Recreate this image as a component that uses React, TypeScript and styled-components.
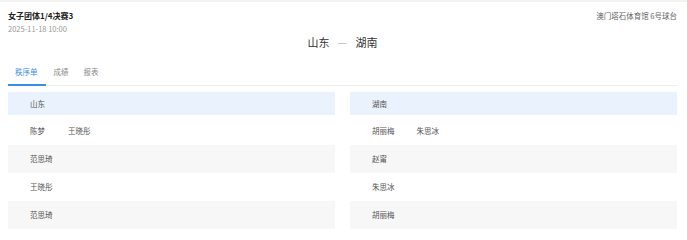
import React from "react";
import styled, { createGlobalStyle } from "styled-components";

type Side = {
  team: string;
  rows: string[][];
};

const home: Side = {
  team: "山东",
  rows: [["陈梦", "王晓彤"], ["范思琦"], ["王晓彤"], ["范思琦"]],
};

const away: Side = {
  team: "湖南",
  rows: [["胡丽梅", "朱思冰"], ["赵甯"], ["朱思冰"], ["胡丽梅"]],
};

const tabs = ["秩序单", "成绩", "报表"];

const GlobalStyle = createGlobalStyle`
  html, body {
    margin: 0;
    padding: 0;
    background: #ffffff;
    font-family: "Noto Sans CJK SC", "Noto Sans", sans-serif;
  }
`;

const TeamColumn = ({ side }: { side: Side }) => (
  <Column>
    <Row tone="head">
      <Name>{side.team}</Name>
    </Row>
    {side.rows.map((names, i) => (
      <Row key={i} tone={i % 2 === 0 ? "plain" : "gray"}>
        {names.map((n, j) => (
          <Name key={j}>{n}</Name>
        ))}
      </Row>
    ))}
  </Column>
);

const App = () => {
  return (
    <Page>
      <GlobalStyle />
      <Header>
        <Info>
          <Title>女子团体1/4决赛3</Title>
          <Time>2025-11-18 10:00</Time>
        </Info>
        <Versus>
          <span>山东</span>
          <Dash>—</Dash>
          <span>湖南</span>
        </Versus>
        <Venue>澳门塔石体育馆 6号球台</Venue>
      </Header>
      <Tabs>
        {tabs.map((t, i) => (
          <Tab key={t} active={i === 0}>
            {t}
          </Tab>
        ))}
      </Tabs>
      <Grid>
        <TeamColumn side={home} />
        <TeamColumn side={away} />
      </Grid>
    </Page>
  );
};

export default App;

const Page = styled.div`
  width: 687px;
  height: 240px;
  box-sizing: border-box;
  border-top: 2px solid #f3f3f3;
  padding: 0 10px 0 8px;
  overflow: hidden;
`;

const Header = styled.div`
  display: grid;
  grid-template-columns: 1fr auto 1fr;
  height: 56px;
  padding-top: 8px;
  box-sizing: border-box;
`;

const Info = styled.div`
  display: flex;
  flex-direction: column;
  gap: 2px;
`;

const Title = styled.div`
  font-size: 8px;
  font-weight: 700;
  color: #222;
  line-height: 11px;
`;

const Time = styled.div`
  font-size: 7.5px;
  color: #999;
  line-height: 11px;
`;

const Versus = styled.div`
  display: flex;
  align-items: center;
  gap: 8px;
  margin-top: 24px;
  align-self: start;
  font-size: 11px;
  color: #333;
  line-height: 16px;
`;

const Dash = styled.span`
  color: #bbb;
`;

const Venue = styled.div`
  justify-self: end;
  font-size: 7.5px;
  color: #666;
  line-height: 12px;
`;

const Tabs = styled.div`
  display: flex;
  border-bottom: 1px solid #eeeeee;
  height: 28px;
  box-sizing: border-box;
`;

const Tab = styled.div<{ active?: boolean }>`
  padding: 8px 7px 0;
  margin-right: 1px;
  font-size: 7.5px;
  line-height: 12px;
  color: ${(p) => (p.active ? "#3a8ee6" : "#888")};
  border-bottom: 2px solid ${(p) => (p.active ? "#3a8ee6" : "transparent")};
  margin-bottom: -1px;
  &:first-child {
    padding-right: 8px;
  }
`;

const Grid = styled.div`
  display: grid;
  grid-template-columns: 1fr 1fr;
  column-gap: 15px;
  padding-top: 6px;
`;

const Column = styled.div`
  display: flex;
  flex-direction: column;
`;

const Row = styled.div<{ tone: "head" | "plain" | "gray" }>`
  display: flex;
  align-items: center;
  gap: 22px;
  height: 28px;
  padding-left: 22px;
  background: ${(p) =>
    p.tone === "head" ? "#eaf2fd" : p.tone === "gray" ? "#f7f7f7" : "#ffffff"};
  &:first-child {
    height: 23px;
    margin-bottom: 2px;
  }
`;

const Name = styled.span`
  font-size: 7.5px;
  color: #555;
  min-width: 16px;
  line-height: 12px;
`;
